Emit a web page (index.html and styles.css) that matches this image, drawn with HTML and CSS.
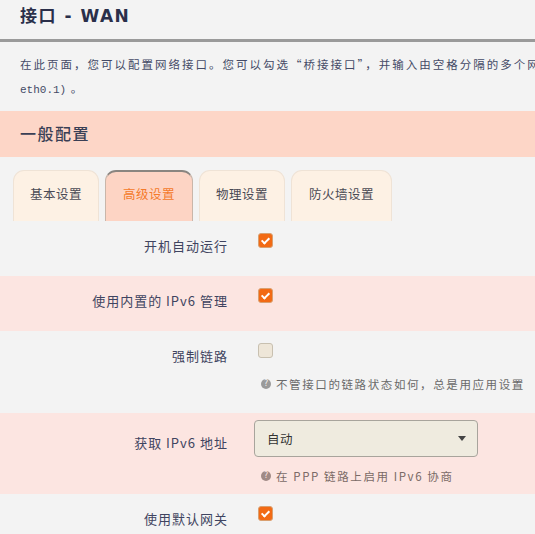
FILE: index.html
```html
<!DOCTYPE html>
<html lang="zh">
<head>
<meta charset="utf-8">
<link rel="stylesheet" href="styles.css">
</head>
<body>
<div class="page">
  <h2 class="title">接口 - WAN</h2>
  <div class="desc">
    <p>在此页面，您可以配置网络接口。您可以勾选“桥接接口”，并输入由空格分隔的多个网络接口的名称来桥接多个接口，接口名称中也可以使用 VLAN 记法（如：</p>
    <p><span class="mono">eth0.1)</span> 。</p>
  </div>
  <div class="section-head">一般配置</div>
  <div class="tabs">
    <div class="tab">基本设置</div>
    <div class="tab active">高级设置</div>
    <div class="tab">物理设置</div>
    <div class="tab wide">防火墙设置</div>
  </div>
  <div class="rows">
    <div class="row">
      <div class="label">开机自动运行</div>
      <div class="field"><span class="cb on"></span></div>
    </div>
    <div class="row alt">
      <div class="label">使用内置的 IPv6 管理</div>
      <div class="field"><span class="cb on"></span></div>
    </div>
    <div class="row tall">
      <div class="label">强制链路</div>
      <div class="field">
        <span class="cb"></span>
        <div class="help"><span class="q">?</span>不管接口的链路状态如何，总是用应用设置</div>
      </div>
    </div>
    <div class="row alt sel-row">
      <div class="label">获取 IPv6 地址</div>
      <div class="field">
        <div class="select"><span>自动</span><span class="caret"></span></div>
        <div class="help"><span class="q">?</span>在 PPP 链路上启用 IPv6 协商</div>
      </div>
    </div>
    <div class="row">
      <div class="label">使用默认网关</div>
      <div class="field"><span class="cb on"></span></div>
    </div>
  </div>
</div>
</body>
</html>
```
FILE: styles.css
```css
html, body {
  margin: 0;
  padding: 0;
  background: #f3f3f3;
  overflow: hidden;
}
body {
  font-family: "Noto Sans CJK SC", "Noto Sans", sans-serif;
  color: #3a3f55;
}
.page {
  width: 535px;
  height: 534px;
  overflow: hidden;
}
.title {
  margin: 0;
  padding: 3px 0 0 20px;
  height: 36px;
  box-sizing: content-box;
  font-family: "DejaVu Sans", "Noto Sans CJK SC", sans-serif;
  font-size: 17px;
  font-weight: 700;
  line-height: 26px;
  color: #2a2f4a;
  border-bottom: 3px solid #9a9a9a;
  letter-spacing: 1.5px;
}
.desc {
  height: 69px;
  padding: 10px 0 0 20px;
  box-sizing: border-box;
  font-size: 11.5px;
  letter-spacing: 2px;
  line-height: 24px;
  color: #444a66;
  white-space: nowrap;
  overflow: hidden;
}
.desc p { margin: 0; }
.mono { font-family: "Liberation Mono", monospace; font-size: 11px; letter-spacing: 0; }
.section-head {
  height: 46px;
  line-height: 44px;
  background: #fdd6c7;
  padding-left: 20px;
  font-size: 16px;
  letter-spacing: 1.5px;
  font-weight: 500;
  color: #3a3f55;
}
.tabs {
  display: flex;
  gap: 6px;
  padding: 13px 0 0 13px;
  height: 64px;
  box-sizing: border-box;
}
.tab {
  width: 86px;
  height: 51px;
  box-sizing: border-box;
  background: #fdf1e4;
  border: 1px solid #efe3d6;
  border-bottom: none;
  border-radius: 11px 11px 0 0;
  text-align: center;
  line-height: 46px;
  font-size: 12.5px;
  letter-spacing: 0.5px;
  color: #4a4a55;
}
.tab.wide { width: 101px; }
.tab.active {
  width: 88px;
  background: #fdd4c4;
  border-top: 2px solid #8a8580;
  border-left: 1px solid #c9b6aa;
  border-right: 1px solid #c9b6aa;
  color: #f47a2a;
  line-height: 44px;
}
.rows { display: flex; flex-direction: column; }
.row {
  display: grid;
  grid-template-columns: 228px 1fr;
  column-gap: 30px;
  height: 55px;
  box-sizing: border-box;
  padding-top: 12px;
}
.row.alt { background: #fce5e1; }
.row.tall { height: 82px; }
.row.sel-row { height: 81px; padding-top: 7px; }
.label {
  text-align: right;
  font-size: 13px;
  letter-spacing: 1px;
  line-height: 16px;
  padding-top: 5px;
  color: #3f4460;
}
.sel-row .label { padding-top: 15px; }
.field { display: flex; flex-direction: column; align-items: flex-start; }
.cb {
  display: block;
  width: 15px;
  height: 15px;
  box-sizing: border-box;
  border-radius: 3px;
  border: 1px solid #c8c0b0;
  background: #eee6d8;
}
.cb.on {
  background: #f26a14;
  border-color: #d9a070;
  position: relative;
}
.cb.on::after {
  content: "";
  position: absolute;
  left: 4px;
  top: 2px;
  width: 3px;
  height: 6px;
  border: solid #fff;
  border-width: 0 2px 2px 0;
  transform: rotate(45deg);
}
.help {
  margin-top: 19px;
  margin-left: 3px;
  font-size: 11.5px;
  letter-spacing: 1.6px;
  line-height: 14px;
  color: #6a6a6a;
  white-space: nowrap;
  display: flex;
  align-items: center;
  gap: 5px;
}
.q {
  display: inline-block;
  width: 10px;
  height: 10px;
  border-radius: 50%;
  background: #9a9a9a;
  color: #f3f3f3;
  font-size: 8px;
  line-height: 10px;
  letter-spacing: 0;
  text-align: center;
  font-family: "DejaVu Sans", sans-serif;
}
.sel-row .help { margin-top: 12px; color: #7a6a66; }
.sel-row .q { background: #a08a86; color: #fce5e1; }
.select {
  width: 224px;
  height: 37px;
  box-sizing: border-box;
  margin-left: -4px;
  border: 1px solid #a8a49c;
  border-radius: 4px;
  background: #efebdf;
  display: flex;
  align-items: center;
  justify-content: space-between;
  padding: 0 11px 0 12px;
  font-size: 12.5px;
  letter-spacing: 0.5px;
  color: #333;
}
.caret {
  width: 0;
  height: 0;
  border-left: 4px solid transparent;
  border-right: 4px solid transparent;
  border-top: 5px solid #444;
}
```
